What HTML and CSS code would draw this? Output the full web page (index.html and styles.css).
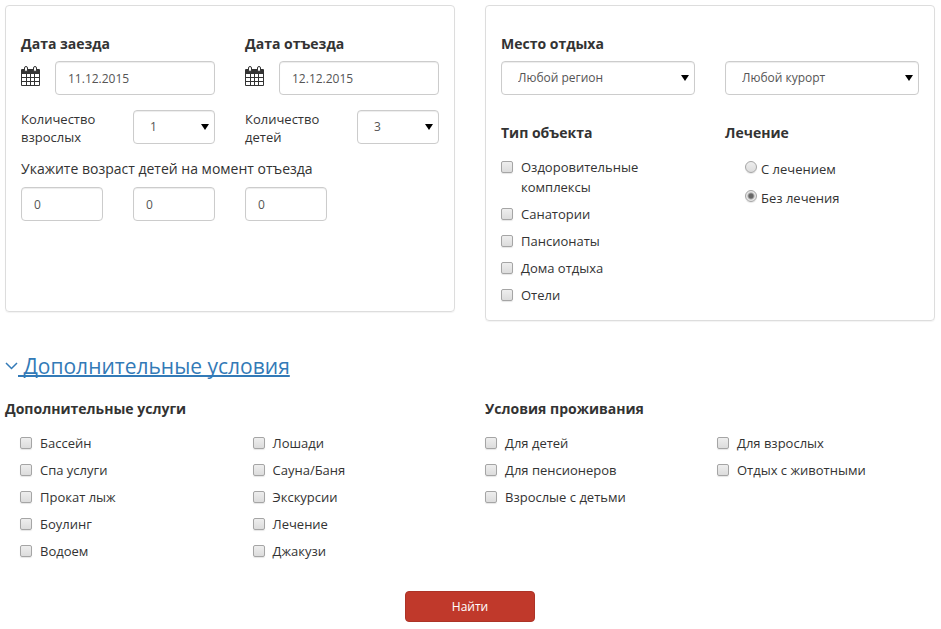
FILE: index.html
```
<!DOCTYPE html>
<html lang="ru">
<head>
    <meta charset="UTF-8">
    <meta name="viewport" content="width=device-width, initial-scale=1.0">
    <title>Поиск отдыха</title>
    <link rel="stylesheet" href="styles.css">
</head>
<body>
    <svg class="sprite" aria-hidden="true">
        <symbol id="calendar" viewBox="0 0 19 21">
            <path fill="#333" fill-rule="evenodd" d="M1 3h17a1 1 0 0 1 1 1v15a1 1 0 0 1-1 1H1a1 1 0 0 1-1-1V4a1 1 0 0 1 1-1zM1 8v3h4V8zM6 8v3h3V8zM10 8v3h3V8zM14 8v3h4V8zM1 12v3h4v-3zM6 12v3h3v-3zM10 12v3h3v-3zM14 12v3h4v-3zM1 16v3h4v-3zM6 16v3h3v-3zM10 16v3h3v-3zM14 16v3h4v-3z"/>
            <rect x="3.500" y=".5" width="3" height="5" rx="1.500" fill="#fff" stroke="#333"/>
            <rect x="12.500" y=".5" width="3" height="5" rx="1.500" fill="#fff" stroke="#333"/>
        </symbol>
    </svg>
    <form class="search" action="#">
        <div class="halves">
            <div class="panel panel-dates">
                <div class="two-cols">
                    <div>
                        <label class="title" for="dateIn">Дата заезда</label>
                        <div class="date">
                            <svg class="calendar"><use href="#calendar"/></svg>
                            <input class="control" type="text" id="dateIn" value="11.12.2015">
                        </div>
                    </div>
                    <div>
                        <label class="title" for="dateOut">Дата отъезда</label>
                        <div class="date">
                            <svg class="calendar"><use href="#calendar"/></svg>
                            <input class="control" type="text" id="dateOut" value="12.12.2015">
                        </div>
                    </div>
                </div>
                <div class="four-cols counts">
                    <label for="adults">Количество взрослых</label>
                    <div class="select"><select class="control" id="adults"><option>1</option><option>2</option><option>3</option></select></div>
                    <label for="children">Количество детей</label>
                    <div class="select"><select class="control" id="children"><option>1</option><option>2</option><option selected>3</option></select></div>
                </div>
                <div class="ages-title">Укажите возраст детей на момент отъезда</div>
                <div class="four-cols">
                    <input class="control" type="text" value="0" aria-label="Возраст 1">
                    <input class="control" type="text" value="0" aria-label="Возраст 2">
                    <input class="control" type="text" value="0" aria-label="Возраст 3">
                </div>
            </div>

            <div class="panel">
                <label class="title" for="region">Место отдыха</label>
                <div class="two-cols">
                    <div class="select"><select class="control" id="region"><option>Любой регион</option></select></div>
                    <div class="select"><select class="control" aria-label="Курорт"><option>Любой курорт</option></select></div>
                </div>
                <div class="two-cols types">
                    <div>
                        <h4 class="title">Тип объекта</h4>
                        <div class="checks">
                            <label class="check"><input type="checkbox">Оздоровительные комплексы</label>
                            <label class="check"><input type="checkbox">Санатории</label>
                            <label class="check"><input type="checkbox">Пансионаты</label>
                            <label class="check"><input type="checkbox">Дома отдыха</label>
                            <label class="check"><input type="checkbox">Отели</label>
                        </div>
                    </div>
                    <div>
                        <h4 class="title">Лечение</h4>
                        <div class="radios">
                            <label class="radio"><input type="radio" name="treatment">С лечением</label>
                            <label class="radio"><input type="radio" name="treatment" checked>Без лечения</label>
                        </div>
                    </div>
                </div>
            </div>
        </div>

        <a class="more" href="#extra"><svg class="chevron" viewBox="0 0 13 8"><path d="M1 1l5.500 5.500L12 1" fill="none" stroke="#337ab7" stroke-width="1.500"/></svg><span>&nbsp;Дополнительные условия</span></a>

        <div class="halves" id="extra">
            <div>
                <h4 class="title">Дополнительные услуги</h4>
                <div class="options options-services">
                    <div class="checks">
                        <label class="check"><input type="checkbox">Бассейн</label>
                        <label class="check"><input type="checkbox">Спа услуги</label>
                        <label class="check"><input type="checkbox">Прокат лыж</label>
                        <label class="check"><input type="checkbox">Боулинг</label>
                        <label class="check"><input type="checkbox">Водоем</label>
                    </div>
                    <div class="checks">
                        <label class="check"><input type="checkbox">Лошади</label>
                        <label class="check"><input type="checkbox">Сауна/Баня</label>
                        <label class="check"><input type="checkbox">Экскурсии</label>
                        <label class="check"><input type="checkbox">Лечение</label>
                        <label class="check"><input type="checkbox">Джакузи</label>
                    </div>
                </div>
            </div>
            <div>
                <h4 class="title">Условия проживания</h4>
                <div class="options">
                    <div class="checks">
                        <label class="check"><input type="checkbox">Для детей</label>
                        <label class="check"><input type="checkbox">Для пенсионеров</label>
                        <label class="check"><input type="checkbox">Взрослые с детьми</label>
                    </div>
                    <div class="checks">
                        <label class="check"><input type="checkbox">Для взрослых</label>
                        <label class="check"><input type="checkbox">Отдых с животными</label>
                    </div>
                </div>
            </div>
        </div>

        <button class="submit" type="submit">Найти</button>
    </form>
</body>
</html>
```
FILE: styles.css
```
* {
    box-sizing: border-box;
}
body {
    margin: 0;
    padding: 5px 6px 5px 5px;
    background-color: #fff;
    color: #333;
    font-family: "Open Sans", "Noto Sans", sans-serif;
    font-size: 13px;
    line-height: 20px;
}
.sprite {
    display: none;
}
.search {
    display: flex;
    flex-direction: column;
}
.halves {
    display: grid;
    grid-template-columns: 1fr 1fr;
    gap: 30px;
    align-items: start;
}
.panel {
    padding: 28px 15px 15px;
    border: 1px solid #ddd;
    border-radius: 4px;
    box-shadow: 0 1px 1px rgba(0, 0, 0, 0.05);
}
.panel-dates {
    min-height: 307px;
}
.two-cols {
    display: grid;
    grid-template-columns: 1fr 1fr;
    column-gap: 30px;
}
.four-cols {
    display: grid;
    grid-template-columns: repeat(4, 1fr);
    column-gap: 30px;
}
.title {
    display: block;
    margin: 0 0 7px;
    font-size: 14px;
    font-weight: 700;
    line-height: 20px;
}
.date {
    display: flex;
    justify-content: space-between;
}
.calendar {
    width: 19px;
    height: 21px;
    margin-top: 5px;
}
.date .control {
    width: 160px;
}
.control {
    width: 100%;
    height: 34px;
    padding: 6px 12px;
    border: 1px solid #ccc;
    border-radius: 4px;
    background-color: #fff;
    box-shadow: inset 0 1px 1px rgba(0, 0, 0, 0.075);
    color: #555;
    font-family: inherit;
    font-size: 12px;
    line-height: 20px;
}
.select {
    position: relative;
}
.select .control {
    display: block;
    appearance: none;
    padding-left: 16px;
}
/* drop-down arrow */
.select::after {
    content: "";
    position: absolute;
    top: 14px;
    right: 6px;
    border: solid transparent;
    border-width: 6px 4px 0;
    border-top-color: #000;
    pointer-events: none;
}
.counts {
    margin-top: 15px;
    line-height: 18px;
}
.ages-title {
    margin: 13px 0 8px;
    font-size: 14px;
}
.types {
    margin-top: 28px;
}
.checks {
    display: flex;
    flex-direction: column;
    gap: 7px;
    padding-top: 7px;
}
.check {
    display: flex;
    align-items: flex-start;
    gap: 8px;
}
.check input,
.radio input {
    flex: none;
    appearance: none;
    width: 12px;
    height: 12px;
    margin: 4px 0 0;
    border: 1px solid #a5a5a5;
    border-radius: 2px;
    background: linear-gradient(#eee, #dcdcdc);
    box-shadow: 0 1px 1px rgba(0, 0, 0, 0.1);
}
.check input:checked {
    background: #666;
}
.radios {
    display: flex;
    flex-direction: column;
    gap: 9px;
    padding: 9px 0 0 20px;
}
.radio {
    display: flex;
    gap: 4px;
}
.radio input {
    margin-top: 2px;
    border-radius: 50%;
}
.radio input:checked {
    background: radial-gradient(#666 0 2px, #e6e6e6 4px);
}
.more {
    align-self: flex-start;
    display: flex;
    align-items: center;
    margin: 30px 0 18px;
    color: #337ab7;
    font-size: 21px;
    line-height: 30px;
    text-decoration: none;
}
.more span {
    text-decoration: underline;
    text-decoration-thickness: 2px;
    text-decoration-skip-ink: none;
}
.chevron {
    width: 13px;
    height: 8px;
}
.options {
    display: grid;
    grid-template-columns: 1fr 1fr;
    column-gap: 14px;
}
.options-services {
    column-gap: 30px;
    padding-left: 15px;
}
.submit {
    align-self: center;
    width: 130px;
    height: 31px;
    margin-top: 30px;
    border: 1px solid #ad3327;
    border-radius: 4px;
    background-color: #c0392b;
    color: #fff;
    font-family: inherit;
    font-size: 12px;
    cursor: pointer;
}
```
